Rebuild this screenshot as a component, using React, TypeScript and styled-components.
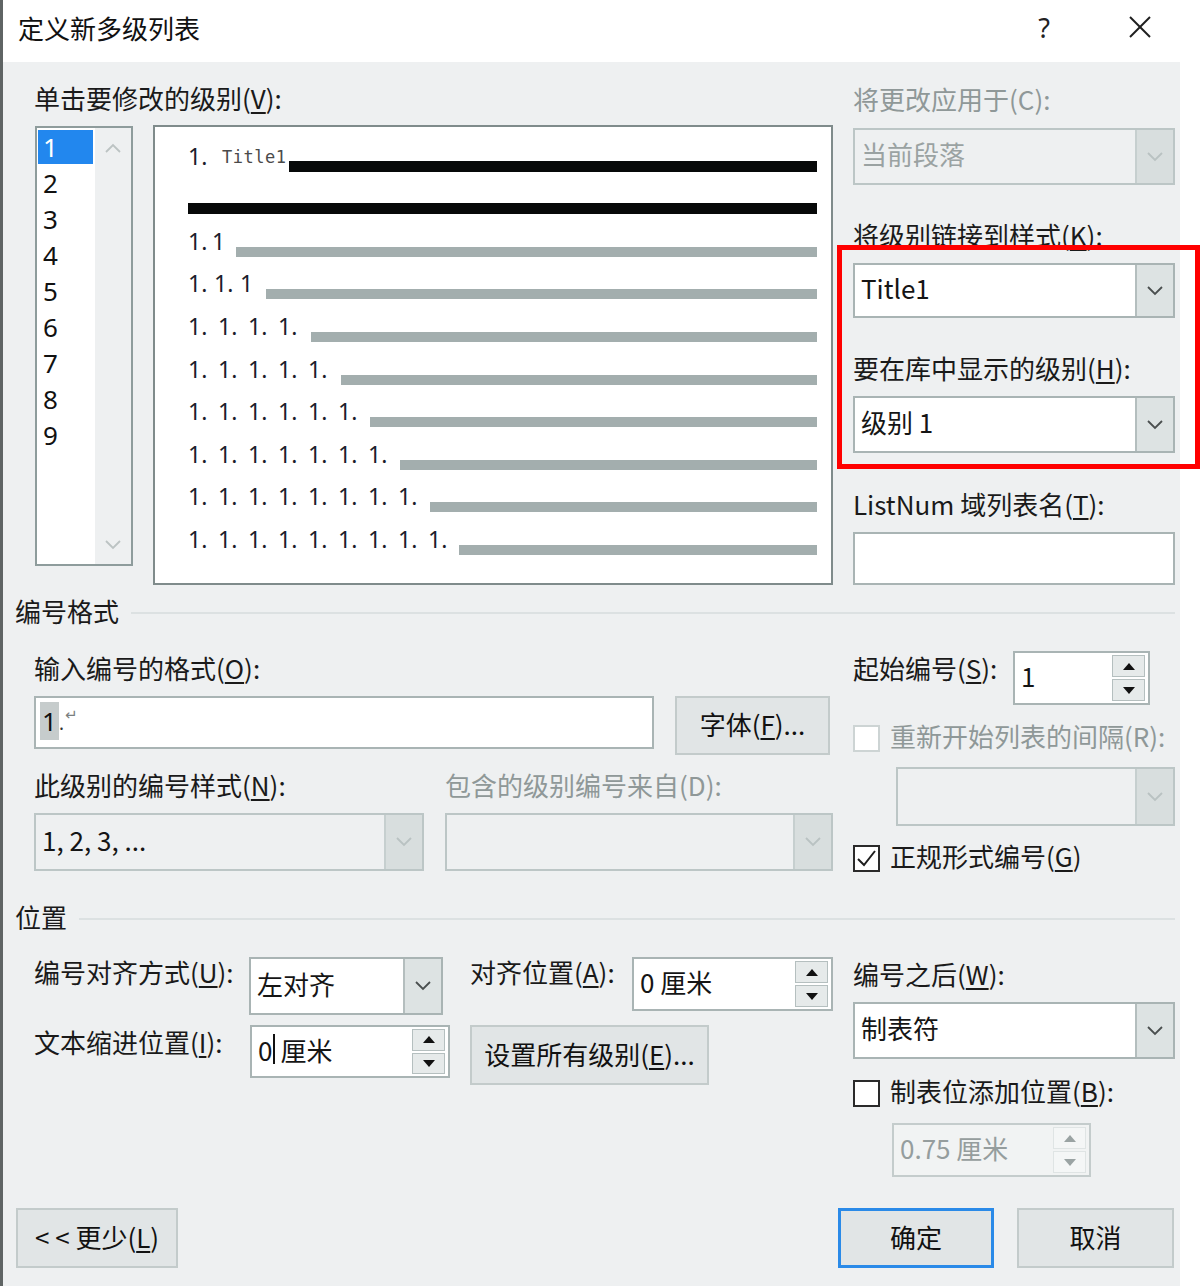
import React from 'react'
import styled, { createGlobalStyle } from 'styled-components'

const GlobalStyle = createGlobalStyle`
  html, body {
    margin: 0;
    padding: 0;
    background: #ffffff;
  }
  body {
    font-family: "Noto Sans CJK SC", "Noto Sans", sans-serif;
    color: #1a1a1a;
  }
`

type Tone = 'white' | 'gray' | 'disabled'

const previewRows = [
  { units: ['1.', '1'], w: 48 },
  { units: ['1.', '1.', '1'], w: 78 },
  { units: ['1.', '1.', '1.', '1.'], w: 123 },
  { units: ['1.', '1.', '1.', '1.', '1.'], w: 153 },
  { units: ['1.', '1.', '1.', '1.', '1.', '1.'], w: 182 },
  { units: ['1.', '1.', '1.', '1.', '1.', '1.', '1.'], w: 212 },
  { units: ['1.', '1.', '1.', '1.', '1.', '1.', '1.', '1.'], w: 242 },
  { units: ['1.', '1.', '1.', '1.', '1.', '1.', '1.', '1.', '1.'], w: 271 },
]

const levels = ['1', '2', '3', '4', '5', '6', '7', '8', '9']

function Chevron({ up, color }: { up?: boolean; color: string }) {
  return (
    <svg width="16" height="10" viewBox="0 0 16 10">
      <polyline
        points={up ? '1,9 8,2 15,9' : '1,1 8,8 15,1'}
        fill="none"
        stroke={color}
        strokeWidth="1.8"
      />
    </svg>
  )
}

function Triangle({ up, color }: { up?: boolean; color: string }) {
  return (
    <svg width="12" height="7" viewBox="0 0 12 7">
      <polygon points={up ? '0,7 6,0 12,7' : '0,0 12,0 6,7'} fill={color} />
    </svg>
  )
}

function Dropdown(props: {
  value?: React.ReactNode
  tone: Tone
  w?: number
  h: number
  mt?: number
  ml?: number
}) {
  const { value, tone, w, h, mt, ml } = props
  return (
    <Styled.Combo $tone={tone} $w={w} $h={h} $mt={mt} $ml={ml}>
      <Styled.ComboText $disabled={tone === 'disabled'}>{value}</Styled.ComboText>
      <Styled.ComboArrow $tone={tone}>
        <Chevron color={tone === 'white' ? '#4a4f4f' : '#b9c2c2'} />
      </Styled.ComboArrow>
    </Styled.Combo>
  )
}

function SpinBox(props: {
  children: React.ReactNode
  disabled?: boolean
  w: number
  h: number
  mt?: number
  ml?: number
}) {
  const { children, disabled, w, h, mt, ml } = props
  const arrow = disabled ? '#9aa3a3' : '#111111'
  return (
    <Styled.Spin $disabled={disabled} $w={w} $h={h} $mt={mt} $ml={ml}>
      <Styled.SpinValue $disabled={disabled}>{children}</Styled.SpinValue>
      <Styled.SpinButtons>
        <Styled.SpinButton $disabled={disabled}>
          <Triangle up color={arrow} />
        </Styled.SpinButton>
        <Styled.SpinButton $disabled={disabled}>
          <Triangle color={arrow} />
        </Styled.SpinButton>
      </Styled.SpinButtons>
    </Styled.Spin>
  )
}

function CheckBox({ checked, disabled }: { checked?: boolean; disabled?: boolean }) {
  return (
    <Styled.Check $disabled={disabled}>
      {checked && (
        <svg width="21" height="21" viewBox="0 0 21 21">
          <polyline points="2,11 8,17 19,3" fill="none" stroke="#1e1e1e" strokeWidth="2" />
        </svg>
      )}
    </Styled.Check>
  )
}

export default function App() {
  return (
    <Styled.Root>
      <GlobalStyle />
      <Styled.Dialog>
        <Styled.TitleBar>
          <Styled.Title>定义新多级列表</Styled.Title>
          <Styled.Help>?</Styled.Help>
          <Styled.Close>
            <svg width="24" height="24" viewBox="0 0 24 24">
              <line x1="2" y1="2" x2="22" y2="22" stroke="#1e1e1e" strokeWidth="2" />
              <line x1="22" y1="2" x2="2" y2="22" stroke="#1e1e1e" strokeWidth="2" />
            </svg>
          </Styled.Close>
        </Styled.TitleBar>

        <Styled.Body>
          {/* levels + preview */}
          <Styled.SectionGrid $mt={22}>
            <Styled.Column>
              <Styled.Label>
                单击要修改的级别(<u>V</u>):
              </Styled.Label>
              <Styled.ListRow>
                <Styled.ListBox>
                  <Styled.ListItems>
                    {levels.map((n) => (
                      <Styled.ListItem key={n}>
                        <Styled.ListItemInner $selected={n === '1'}>{n}</Styled.ListItemInner>
                      </Styled.ListItem>
                    ))}
                  </Styled.ListItems>
                  <Styled.ScrollTrack>
                    <Chevron up color="#bcc3c3" />
                    <Chevron color="#bcc3c3" />
                  </Styled.ScrollTrack>
                </Styled.ListBox>

                <Styled.Preview>
                  <Styled.PreviewRow>
                    <Styled.RowText $w={101}>
                      <Styled.Unit>1.</Styled.Unit>
                      <Styled.TitleMark>Title1</Styled.TitleMark>
                    </Styled.RowText>
                    <Styled.Bar $dark />
                  </Styled.PreviewRow>
                  <Styled.PreviewRow>
                    <Styled.RowText $w={0} />
                    <Styled.Bar $dark />
                  </Styled.PreviewRow>
                  {previewRows.map((row, i) => (
                    <Styled.PreviewRow key={i}>
                      <Styled.RowText $w={row.w}>
                        {row.units.map((u, j) => (
                          <Styled.Unit key={j}>{u}</Styled.Unit>
                        ))}
                      </Styled.RowText>
                      <Styled.Bar />
                    </Styled.PreviewRow>
                  ))}
                </Styled.Preview>
              </Styled.ListRow>
            </Styled.Column>

            <Styled.Column>
              <Styled.Label $mt={1} $disabled>
                将更改应用于(C):
              </Styled.Label>
              <Dropdown tone="disabled" value="当前段落" h={57} mt={13} />
              <Styled.Label $mt={36}>
                将级别链接到样式(<u>K</u>):
              </Styled.Label>
              <Dropdown tone="white" value="Title1" h={55} mt={12} />
              <Styled.Label $mt={36}>
                要在库中显示的级别(<u>H</u>):
              </Styled.Label>
              <Dropdown tone="white" value="级别 1" h={57} mt={12} />
              <Styled.Label $mt={37}>
                ListNum 域列表名(<u>T</u>):
              </Styled.Label>
              <Styled.TextInput $w={322} $h={53} $mt={12} />
            </Styled.Column>
          </Styled.SectionGrid>

          <Styled.SectionHeader $mt={12}>编号格式</Styled.SectionHeader>

          <Styled.SectionGrid $mt={0}>
            <Styled.Column>
              <Styled.Label $mt={27}>
                输入编号的格式(<u>O</u>):
              </Styled.Label>
              <Styled.InputRow>
                <Styled.TextInput $w={620} $h={53}>
                  <Styled.Selected>1</Styled.Selected>
                  <Styled.Dot>.</Styled.Dot>
                  <Styled.ReturnMark>↵</Styled.ReturnMark>
                </Styled.TextInput>
                <Styled.Button $w={155} $h={59}>
                  字体(<u>F</u>)...
                </Styled.Button>
              </Styled.InputRow>
              <Styled.PairGrid>
                <Styled.Column>
                  <Styled.Label>
                    此级别的编号样式(<u>N</u>):
                  </Styled.Label>
                  <Dropdown tone="gray" value="1, 2, 3, ..." w={390} h={58} mt={12} />
                </Styled.Column>
                <Styled.Column>
                  <Styled.Label $disabled>包含的级别编号来自(D):</Styled.Label>
                  <Dropdown tone="disabled" w={388} h={58} mt={12} />
                </Styled.Column>
              </Styled.PairGrid>
            </Styled.Column>

            <Styled.Column>
              <Styled.StartRow>
                <Styled.Label $mt={3}>
                  起始编号(<u>S</u>):
                </Styled.Label>
                <SpinBox w={137} h={54}>
                  1
                </SpinBox>
              </Styled.StartRow>
              <Styled.CheckRow $mt={17}>
                <CheckBox disabled />
                <Styled.Label $disabled>重新开始列表的间隔(R):</Styled.Label>
              </Styled.CheckRow>
              <Dropdown tone="disabled" w={279} h={59} mt={15} ml={43} />
              <Styled.CheckRow $mt={16}>
                <CheckBox checked />
                <Styled.Label>
                  正规形式编号(<u>G</u>)
                </Styled.Label>
              </Styled.CheckRow>
            </Styled.Column>
          </Styled.SectionGrid>

          <Styled.SectionHeader $mt={31}>位置</Styled.SectionHeader>

          <Styled.SectionGrid $mt={0}>
            <Styled.PositionGrid>
              <Styled.Label $mt={1}>
                编号对齐方式(<u>U</u>):
              </Styled.Label>
              <Dropdown tone="white" value="左对齐" w={194} h={58} />
              <Styled.SplitCell>
                <Styled.Label $mt={1}>
                  对齐位置(<u>A</u>):
                </Styled.Label>
                <SpinBox w={201} h={54}>
                  0 厘米
                </SpinBox>
              </Styled.SplitCell>

              <Styled.Label $mt={3}>
                文本缩进位置(<u>I</u>):
              </Styled.Label>
              <SpinBox w={200} h={53} ml={1}>
                0<Styled.Caret />厘米
              </SpinBox>
              <Styled.Button $w={239} $h={60}>
                设置所有级别(<u>E</u>)...
              </Styled.Button>
            </Styled.PositionGrid>

            <Styled.Column>
              <Styled.Label $mt={27}>
                编号之后(<u>W</u>):
              </Styled.Label>
              <Dropdown tone="white" value="制表符" h={57} mt={12} />
              <Styled.CheckRow $mt={18}>
                <CheckBox />
                <Styled.Label>
                  制表位添加位置(<u>B</u>):
                </Styled.Label>
              </Styled.CheckRow>
              <SpinBox disabled w={199} h={54} mt={16} ml={39}>
                0.75 厘米
              </SpinBox>
            </Styled.Column>
          </Styled.SectionGrid>

          <Styled.Footer>
            <Styled.Button $w={162} $h={60}>
              {'< < '}更少(<u>L</u>)
            </Styled.Button>
            <Styled.FooterRight>
              <Styled.Button $w={156} $h={60} $primary>
                确定
              </Styled.Button>
              <Styled.Button $w={157} $h={60}>
                取消
              </Styled.Button>
            </Styled.FooterRight>
          </Styled.Footer>
        </Styled.Body>
      </Styled.Dialog>

      <Styled.Highlight />
    </Styled.Root>
  )
}

const Styled = {
  Root: styled.div`
    position: relative;
    width: 1200px;
    height: 1286px;
    overflow: hidden;
  `,
  Dialog: styled.div`
    display: flex;
    flex-direction: column;
    box-sizing: border-box;
    width: 1180px;
    height: 1286px;
    border-left: 3px solid #5f6464;
  `,
  TitleBar: styled.div`
    display: flex;
    align-items: center;
    box-sizing: border-box;
    height: 62px;
    padding: 0 28px 8px 15px;
    background: #ffffff;
  `,
  Title: styled.div`
    font-size: 26px;
    color: #111;
  `,
  Help: styled.div`
    margin-left: auto;
    font-family: "Noto Sans", sans-serif;
    font-size: 27px;
    color: #222;
  `,
  Close: styled.div`
    display: flex;
    margin-left: 78px;
  `,
  Body: styled.div`
    flex: 1;
    display: flex;
    flex-direction: column;
    padding: 0 5px 18px 12px;
    background: #eef0f1;
  `,
  SectionGrid: styled.div<{ $mt: number }>`
    display: grid;
    grid-template-columns: 799px 322px;
    column-gap: 20px;
    align-items: start;
    margin-left: 19px;
    margin-top: ${({ $mt }) => $mt}px;
  `,
  Column: styled.div`
    display: flex;
    flex-direction: column;
    align-items: flex-start;
  `,
  Label: styled.div<{ $mt?: number; $disabled?: boolean }>`
    height: 30px;
    margin-top: ${({ $mt }) => $mt ?? 0}px;
    line-height: 27px;
    font-size: 26px;
    white-space: nowrap;
    color: ${({ $disabled }) => ($disabled ? '#8f9898' : '#1a1a1a')};

    u {
      text-underline-offset: 3px;
    }
  `,
  ListRow: styled.div`
    display: flex;
    align-items: flex-start;
    gap: 20px;
    margin-top: 11px;
  `,
  ListBox: styled.div`
    display: flex;
    box-sizing: border-box;
    width: 98px;
    height: 440px;
    margin: 1px 0 0 1px;
    border: 2px solid #8e9c9c;
  `,
  ListItems: styled.div`
    width: 58px;
    padding-top: 1px;
    background: #ffffff;
  `,
  ListItem: styled.div`
    box-sizing: border-box;
    height: 36px;
    padding: 1px 2px 1px 1px;
  `,
  ListItemInner: styled.div<{ $selected?: boolean }>`
    display: flex;
    align-items: center;
    height: 100%;
    padding-left: 5px;
    font-family: "Noto Sans", sans-serif;
    font-size: 26px;
    color: ${({ $selected }) => ($selected ? '#ffffff' : '#111')};
    background: ${({ $selected }) => ($selected ? '#2287ee' : 'transparent')};
  `,
  ScrollTrack: styled.div`
    flex: 1;
    display: flex;
    flex-direction: column;
    justify-content: space-between;
    align-items: center;
    padding: 15px 0 14px;
    background: #eef0f1;
  `,
  Preview: styled.div`
    box-sizing: border-box;
    width: 680px;
    height: 460px;
    padding: 2px 14px 0 33px;
    border: 2px solid #7f8b8b;
    background: #ffffff;
  `,
  PreviewRow: styled.div`
    display: flex;
    align-items: flex-end;
    height: 42.6px;
  `,
  RowText: styled.div<{ $w: number }>`
    display: flex;
    align-items: flex-end;
    flex-shrink: 0;
    width: ${({ $w }) => $w}px;
    padding-bottom: 4px;
    line-height: 24px;
    font-family: "Noto Sans", sans-serif;
    font-size: 23px;
    color: #1c1d2c;
    white-space: nowrap;
  `,
  Unit: styled.span`
    display: inline-block;
    width: 30px;
  `,
  TitleMark: styled.span`
    margin-left: 4px;
    font-family: "DejaVu Sans Mono", monospace;
    font-size: 17px;
    line-height: 22px;
    letter-spacing: 0.5px;
    color: #4a4a4a;
  `,
  Bar: styled.div<{ $dark?: boolean }>`
    flex: 1;
    height: ${({ $dark }) => ($dark ? 11 : 10)}px;
    background: ${({ $dark }) => ($dark ? '#070909' : '#a3aeae')};
  `,
  Combo: styled.div<{ $tone: Tone; $w?: number; $h: number; $mt?: number; $ml?: number }>`
    display: flex;
    box-sizing: border-box;
    width: ${({ $w }) => ($w ? `${$w}px` : '100%')};
    height: ${({ $h }) => $h}px;
    margin-top: ${({ $mt }) => $mt ?? 0}px;
    margin-left: ${({ $ml }) => $ml ?? 0}px;
    border: 2px solid ${({ $tone }) => ($tone === 'white' ? '#a9b4b4' : '#bcc6c6')};
    background: ${({ $tone }) => ($tone === 'white' ? '#ffffff' : '#eef0f1')};
  `,
  ComboText: styled.div<{ $disabled?: boolean }>`
    flex: 1;
    display: flex;
    align-items: center;
    padding: 0 0 6px 6px;
    font-size: 26px;
    white-space: nowrap;
    color: ${({ $disabled }) => ($disabled ? '#9aa2a2' : '#151515')};
  `,
  ComboArrow: styled.div<{ $tone: Tone }>`
    display: flex;
    align-items: center;
    justify-content: center;
    width: 36px;
    border-left: 2px solid ${({ $tone }) => ($tone === 'white' ? '#b4bebe' : '#c6cfcf')};
    background: ${({ $tone }) => ($tone === 'white' ? '#dde3e3' : '#d8dede')};
  `,
  TextInput: styled.div<{ $w: number; $h: number; $mt?: number }>`
    display: flex;
    align-items: center;
    box-sizing: border-box;
    width: ${({ $w }) => $w}px;
    height: ${({ $h }) => $h}px;
    margin-top: ${({ $mt }) => $mt ?? 0}px;
    padding: 0 0 4px 4px;
    border: 2px solid #a9b4b4;
    background: #ffffff;
    font-size: 26px;
  `,
  Selected: styled.span`
    display: inline-flex;
    align-items: center;
    height: 38px;
    padding: 0 2px;
    background: #c6cccc;
    font-family: "Noto Sans", sans-serif;
    color: #111;
  `,
  Dot: styled.span`
    font-size: 18px;
    align-self: flex-end;
    margin-bottom: 8px;
    color: #333;
  `,
  ReturnMark: styled.span`
    margin-left: 1px;
    margin-bottom: 12px;
    font-family: "DejaVu Sans", sans-serif;
    font-size: 15px;
    color: #7a7f7f;
  `,
  InputRow: styled.div`
    display: flex;
    align-items: flex-start;
    gap: 21px;
    margin-top: 12px;
  `,
  Button: styled.div<{ $w: number; $h: number; $primary?: boolean }>`
    display: flex;
    align-items: center;
    justify-content: center;
    box-sizing: border-box;
    width: ${({ $w }) => $w}px;
    height: ${({ $h }) => $h}px;
    padding-bottom: 4px;
    border: ${({ $primary }) => ($primary ? '3px solid #2a8ae8' : '2px solid #c3cbcb')};
    background: #e1e5e6;
    font-size: 26px;
    color: #111;
    white-space: pre;

    u {
      text-underline-offset: 3px;
    }
  `,
  PairGrid: styled.div`
    display: grid;
    grid-template-columns: 390px 388px;
    column-gap: 21px;
    margin-top: 16px;
  `,
  StartRow: styled.div`
    display: grid;
    grid-template-columns: 160px 137px;
    align-items: start;
    margin-top: 24px;
  `,
  Spin: styled.div<{ $disabled?: boolean; $w: number; $h: number; $mt?: number; $ml?: number }>`
    display: flex;
    box-sizing: border-box;
    width: ${({ $w }) => $w}px;
    height: ${({ $h }) => $h}px;
    margin-top: ${({ $mt }) => $mt ?? 0}px;
    margin-left: ${({ $ml }) => $ml ?? 0}px;
    border: 2px solid ${({ $disabled }) => ($disabled ? '#c4cccc' : '#a9b4b4')};
    background: ${({ $disabled }) => ($disabled ? '#f1f3f3' : '#ffffff')};
  `,
  SpinValue: styled.div<{ $disabled?: boolean }>`
    flex: 1;
    display: flex;
    align-items: center;
    padding: 0 0 5px 6px;
    font-size: 26px;
    white-space: nowrap;
    color: ${({ $disabled }) => ($disabled ? '#959d9d' : '#151515')};
  `,
  SpinButtons: styled.div`
    display: flex;
    flex-direction: column;
    gap: 2px;
    width: 33px;
    padding: 2px 3px 2px 0;
  `,
  SpinButton: styled.div<{ $disabled?: boolean }>`
    flex: 1;
    display: flex;
    align-items: center;
    justify-content: center;
    border: 1px solid ${({ $disabled }) => ($disabled ? '#dfe4e4' : '#b5bfbf')};
    background: ${({ $disabled }) => ($disabled ? '#f4f6f6' : '#e6eaea')};
  `,
  Caret: styled.span`
    display: inline-block;
    width: 2px;
    height: 30px;
    margin: 0 5px 0 1px;
    background: #111;
  `,
  CheckRow: styled.div<{ $mt: number }>`
    display: flex;
    align-items: center;
    gap: 10px;
    height: 30px;
    margin-top: ${({ $mt }) => $mt}px;
  `,
  Check: styled.div<{ $disabled?: boolean }>`
    display: flex;
    align-items: center;
    justify-content: center;
    box-sizing: border-box;
    width: 27px;
    height: 27px;
    margin-top: 2px;
    border: 2px solid ${({ $disabled }) => ($disabled ? '#cdd4d4' : '#2a2a2a')};
    background: #ffffff;
  `,
  SectionHeader: styled.div<{ $mt: number }>`
    display: flex;
    align-items: center;
    gap: 12px;
    box-sizing: border-box;
    height: 30px;
    margin-top: ${({ $mt }) => $mt}px;
    padding-bottom: 3px;
    font-size: 26px;
    color: #1a1a1a;

    &::after {
      content: '';
      flex: 1;
      height: 2px;
      margin-top: 4px;
      background: #dce1e2;
    }
  `,
  PositionGrid: styled.div`
    display: grid;
    grid-template-columns: 195px 201px 363px;
    column-gap: 20px;
    row-gap: 10px;
    align-items: start;
    padding-top: 24px;
  `,
  SplitCell: styled.div`
    display: flex;
    justify-content: space-between;
    align-items: flex-start;
  `,
  Footer: styled.div`
    display: flex;
    align-items: center;
    margin: auto 1px 0 1px;
  `,
  FooterRight: styled.div`
    display: flex;
    gap: 23px;
    margin-left: auto;
  `,
  Highlight: styled.div`
    position: absolute;
    left: 837px;
    top: 245px;
    box-sizing: border-box;
    width: 363px;
    height: 224px;
    border: 5px solid #ff0000;
    pointer-events: none;
  `,
}
